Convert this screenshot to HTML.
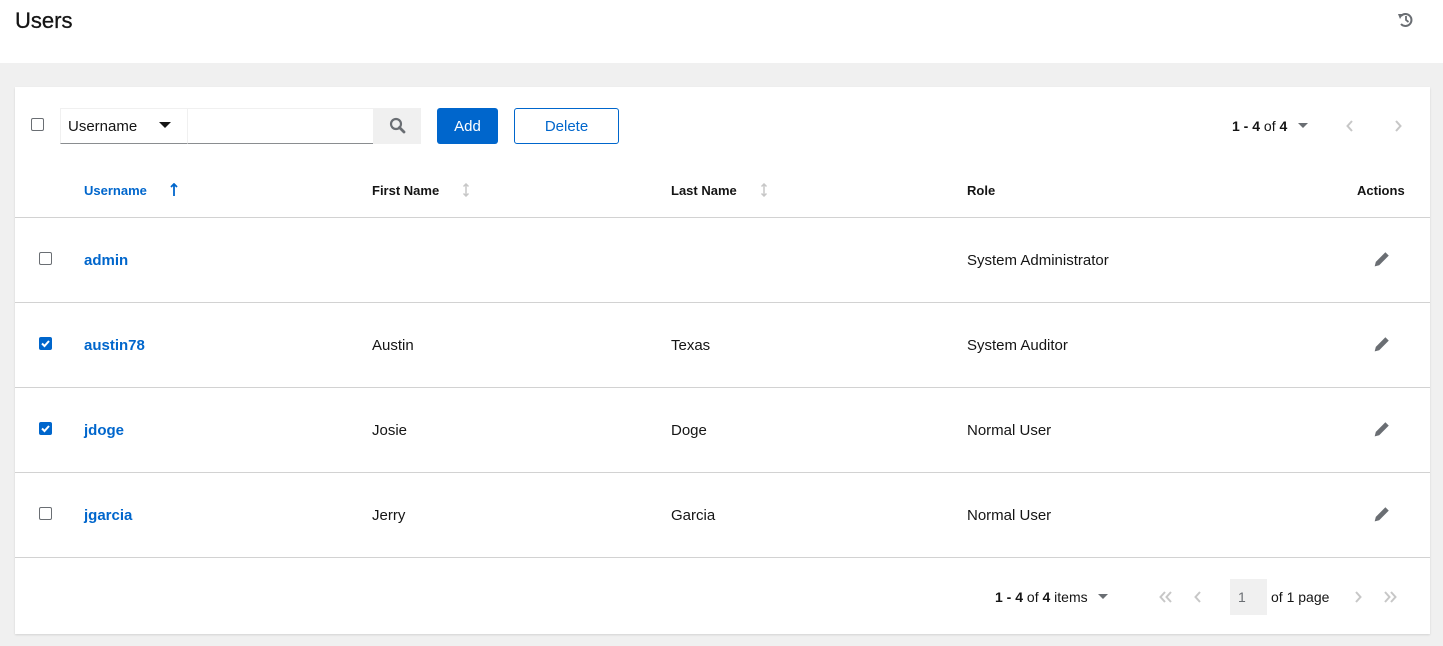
<!DOCTYPE html>
<html><head><meta charset="utf-8"><style>
*{box-sizing:border-box;margin:0;padding:0}
body{width:1443px;height:646px;background:#f0f0f0;font-family:"Liberation Sans",sans-serif;color:#151515;position:relative;overflow:hidden;font-size:15px}
.a{position:absolute}
.hdr{left:0;top:0;width:1443px;height:63px;background:#fff}
.card{left:15px;top:87px;width:1415px;height:547px;background:#fff;box-shadow:0 1px 2px rgba(0,0,0,.12)}
.cb{width:13px;height:13px;border:1px solid #6a6e73;border-radius:2px;background:#fff}
.cbc{width:13px;height:13px;border-radius:2px;background:#0066cc}
.line{left:15px;width:1415px;height:1px;background:#d2d2d2}
.th{font-size:13px;font-weight:bold;top:183px}
.link{color:#0066cc;font-weight:bold;font-size:15px}
.cell{font-size:15px}
</style></head><body>
<div class="a hdr"></div>
<div class="a" style="left:15px;top:8px;font-size:22px;-webkit-text-stroke:0.3px #151515">Users</div>
<svg class="a" style="left:1397px;top:11px" width="18" height="18" viewBox="0 0 18 18"><path d="M4 5 A6 6 0 1 1 4 13" fill="none" stroke="#6a6e73" stroke-width="2"/><path d="M1 3 L6 3 L3 8 Z" fill="#6a6e73"/><path d="M9 5 V9 L11.5 11" fill="none" stroke="#6a6e73" stroke-width="1.8"/></svg>
<div class="a card"></div>
<div class="a cb" style="left:31px;top:118px"></div>
<div class="a" style="left:60px;top:108px;width:128px;height:36px;border:1px solid #f0f0f0;border-bottom-color:#8a8d90"></div>
<div class="a" style="left:68px;top:118px;font-size:15px">Username</div>
<svg class="a" style="left:159px;top:122px" width="12" height="7"><path d="M0 0H12L6 6Z" fill="#151515"/></svg>
<div class="a" style="left:188px;top:108px;width:186px;height:36px;border-top:1px solid #f0f0f0;border-bottom:1px solid #8a8d90"></div>
<div class="a" style="left:373px;top:108px;width:48px;height:36px;background:#f0f0f0"></div>
<svg class="a" style="left:389px;top:117px" width="17" height="17" viewBox="0 0 17 17"><circle cx="7" cy="7" r="5" fill="none" stroke="#6a6e73" stroke-width="2.2"/><path d="M10.5 10.5L15 15" stroke="#6a6e73" stroke-width="2.8" stroke-linecap="round"/></svg>
<div class="a" style="left:437px;top:108px;width:61px;height:36px;background:#0066cc;border-radius:3px;color:#fff;text-align:center;line-height:37px">Add</div>
<div class="a" style="left:514px;top:108px;width:105px;height:36px;border:1px solid #0066cc;border-radius:3px;color:#0066cc;text-align:center;line-height:35px">Delete</div>
<div class="a" style="left:1232px;top:118px;font-size:14px"><b style="font-weight:600">1 - 4</b> of <b style="font-weight:600">4</b></div>
<svg class="a" style="left:1298px;top:123px" width="10" height="5"><path d="M0 0H10L5 5Z" fill="#6a6e73"/></svg>
<svg class="a" style="left:1346px;top:120px" width="8" height="12"><path d="M6 1L1.5 6L6 11" fill="none" stroke="#c7c7c7" stroke-width="2"/></svg>
<svg class="a" style="left:1394px;top:120px" width="8" height="12"><path d="M2 1L6.5 6L2 11" fill="none" stroke="#c7c7c7" stroke-width="2"/></svg>
<div class="a th link" style="left:84px;font-size:13px">Username</div>
<svg class="a" style="left:170px;top:183px" width="8" height="14"><path d="M4 1V13M1 4L4 1L7 4" fill="none" stroke="#0066cc" stroke-width="1.8"/></svg>
<div class="a th" style="left:372px">First Name</div>
<svg class="a" style="left:462px;top:183px" width="8" height="14"><path d="M4 1V13M1.5 3.5L4 1L6.5 3.5M1.5 10.5L4 13L6.5 10.5" fill="none" stroke="#c7c7c7" stroke-width="1.5"/></svg>
<div class="a th" style="left:671px">Last Name</div>
<svg class="a" style="left:760px;top:183px" width="8" height="14"><path d="M4 1V13M1.5 3.5L4 1L6.5 3.5M1.5 10.5L4 13L6.5 10.5" fill="none" stroke="#c7c7c7" stroke-width="1.5"/></svg>
<div class="a th" style="left:967px">Role</div>
<div class="a th" style="left:1357px">Actions</div>
<div class="a line" style="top:217px"></div>
<div class="a line" style="top:302px"></div>
<div class="a line" style="top:387px"></div>
<div class="a line" style="top:472px"></div>
<div class="a line" style="top:557px"></div>

<div class="a cb" style="left:39px;top:252px"></div>
<div class="a link" style="left:84px;top:252px">admin</div>
<div class="a cell" style="left:967px;top:252px">System Administrator</div>

<svg class="a cbc" style="left:39px;top:337px" width="13" height="13" viewBox="0 0 13 13"><path d="M3 6.5L5.5 9L10 4" fill="none" stroke="#fff" stroke-width="2"/></svg>
<div class="a link" style="left:84px;top:337px">austin78</div>
<div class="a cell" style="left:372px;top:337px">Austin</div>
<div class="a cell" style="left:671px;top:337px">Texas</div>
<div class="a cell" style="left:967px;top:337px">System Auditor</div>

<svg class="a cbc" style="left:39px;top:422px" width="13" height="13" viewBox="0 0 13 13"><path d="M3 6.5L5.5 9L10 4" fill="none" stroke="#fff" stroke-width="2"/></svg>
<div class="a link" style="left:84px;top:422px">jdoge</div>
<div class="a cell" style="left:372px;top:422px">Josie</div>
<div class="a cell" style="left:671px;top:422px">Doge</div>
<div class="a cell" style="left:967px;top:422px">Normal User</div>

<div class="a cb" style="left:39px;top:507px"></div>
<div class="a link" style="left:84px;top:507px">jgarcia</div>
<div class="a cell" style="left:372px;top:507px">Jerry</div>
<div class="a cell" style="left:671px;top:507px">Garcia</div>
<div class="a cell" style="left:967px;top:507px">Normal User</div>

<svg class="a" style="left:1373px;top:250px" width="18" height="18" viewBox="0 0 16 16"><path d="M1.5 14.5L2.5 10.5L11 2L14 5L5.5 13.5Z" fill="#6a6e73"/></svg>
<svg class="a" style="left:1373px;top:335px" width="18" height="18" viewBox="0 0 16 16"><path d="M1.5 14.5L2.5 10.5L11 2L14 5L5.5 13.5Z" fill="#6a6e73"/></svg>
<svg class="a" style="left:1373px;top:420px" width="18" height="18" viewBox="0 0 16 16"><path d="M1.5 14.5L2.5 10.5L11 2L14 5L5.5 13.5Z" fill="#6a6e73"/></svg>
<svg class="a" style="left:1373px;top:505px" width="18" height="18" viewBox="0 0 16 16"><path d="M1.5 14.5L2.5 10.5L11 2L14 5L5.5 13.5Z" fill="#6a6e73"/></svg>

<div class="a" style="left:995px;top:589px;font-size:14px"><b style="font-weight:600">1 - 4</b> of <b style="font-weight:600">4</b> items</div>
<svg class="a" style="left:1098px;top:594px" width="10" height="5"><path d="M0 0H10L5 5Z" fill="#6a6e73"/></svg>
<svg class="a" style="left:1159px;top:591px" width="14" height="12"><path d="M6 1L1.5 6L6 11M12 1L7.5 6L12 11" fill="none" stroke="#c7c7c7" stroke-width="2"/></svg>
<svg class="a" style="left:1194px;top:591px" width="8" height="12"><path d="M6 1L1.5 6L6 11" fill="none" stroke="#c7c7c7" stroke-width="2"/></svg>
<div class="a" style="left:1230px;top:579px;width:37px;height:36px;background:#f0f0f0;color:#6a6e73;font-size:14px;line-height:36px;padding-left:8px">1</div>
<div class="a" style="left:1271px;top:589px;font-size:14px">of 1 page</div>
<svg class="a" style="left:1354px;top:591px" width="8" height="12"><path d="M2 1L6.5 6L2 11" fill="none" stroke="#c7c7c7" stroke-width="2"/></svg>
<svg class="a" style="left:1383px;top:591px" width="14" height="12"><path d="M2 1L6.5 6L2 11M8 1L12.5 6L8 11" fill="none" stroke="#c7c7c7" stroke-width="2"/></svg>
</body></html>
